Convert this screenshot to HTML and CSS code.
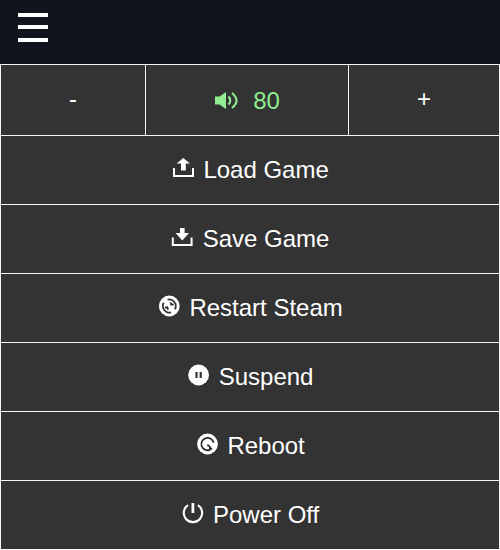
FILE: index.html
```html
<!DOCTYPE html>
<html lang="en">
<head>
<meta charset="utf-8">
<title>Remote</title>
<link rel="stylesheet" href="styles.css">
</head>
<body>
<header class="header">
  <svg class="menu" viewBox="0 0 30 30"><path d="M0 1h30v4H0zM0 13h30v4H0zM0 26h30v4H0z"/></svg>
</header>
<main class="panel">
  <div class="volume">
    <button class="cell step">-</button>
    <div class="cell level">
      <svg class="icon" viewBox="0 0 24 24"><path d="M1 7.500h4.500L12 3v17l-6.500-4.500H1z"/><path class="line" d="M14.500 7.500q3.600 4 0 8M18 4q9 7.500 0 15"/></svg>
      <span>80</span>
    </div>
    <button class="cell step">+</button>
  </div>
  <button class="cell">
    <svg class="icon" viewBox="0 0 24 24"><path d="M10.300 0L17 5.500h-4.200v7H8v-7H3.600z"/><path d="M0 10h2v7h17v-7h2v9H0z"/></svg>
    <span>Load Game</span>
  </button>
  <button class="cell">
    <svg class="icon" viewBox="0 0 24 24"><path d="M8 1h4.600v5H17l-6.700 7.500L3.600 6H8z"/><path d="M-.2 10.500h2V17h16.800v-6.500h2V19H-.2z"/></svg>
    <span>Save Game</span>
  </button>
  <button class="cell">
    <svg class="icon" viewBox="0.900 0 24 24"><circle cx="11.200" cy="10" r="10.400"/><path class="groove" d="M9.500 3.700a6.500 6.500 0 0 1 7.300 9.500M12.900 16.300a6.500 6.500 0 0 1-7.300-9.500M12.400 6.400l.8 2.300 2.400-.3M10 13.600l-.8-2.300-2.400.3"/></svg>
    <span>Restart Steam</span>
  </button>
  <button class="cell">
    <svg class="icon" viewBox="0.600 0 24 24"><circle cx="11.200" cy="10" r="10.400"/><path class="cut" d="M8 7h2.200v6H8zM12.200 7h2.200v6h-2.200z"/></svg>
    <span>Suspend</span>
  </button>
  <button class="cell">
    <svg class="icon" viewBox="0.700 0 24 24"><circle cx="11.200" cy="10" r="10.400"/><path class="groove" d="M17.300 8.800A6.200 6.200 0 1 0 13.500 15.800L15.800 14.300M13.500 15.300l.2-2.400-2.700-2.200"/></svg>
    <span>Reboot</span>
  </button>
  <button class="cell">
    <svg class="icon" viewBox="0.300 0 24 24"><path d="M9.800 0h2.800v10H9.800z"/><path class="line" d="M6.300 2.200a9.200 9.200 0 1 0 9.900 0"/></svg>
    <span>Power Off</span>
  </button>
</main>
</body>
</html>
```
FILE: styles.css
```css
* {
  box-sizing: border-box;
}

body {
  margin: 0;
  background: #10141d;
  color: #fff;
  font: 24px/28px "Liberation Sans", Arial, sans-serif;
}

.header {
  height: 64px;
  padding: 12px 18px;
}

.menu {
  display: block;
  width: 30px;
  height: 30px;
  fill: #fff;
}

.panel {
  display: grid;
  grid-template-rows: 70px repeat(6, 68px);
  gap: 1px;
  height: 486px;
  padding: 1px;
  background: #f5f5f5;
}

.volume {
  display: grid;
  grid-template-columns: 144px 202px 1fr;
  gap: 1px;
}

.cell {
  display: flex;
  align-items: center;
  justify-content: center;
  gap: 6.8px;
  margin: 0;
  padding: 0 0 0 1.400px;
  border: 0;
  background: #333;
  color: inherit;
  font: inherit;
}

.step {
  padding: 0 0 2px;
}

.level {
  gap: 15px;
  padding: 2px 0 0;
  color: #90ee90;
}

.icon {
  flex: none;
  width: 24px;
  height: 24px;
  fill: currentColor;
  overflow: visible;
}

.level .icon {
  margin-top: -1px;
}

.line {
  fill: none;
  stroke: currentColor;
  stroke-width: 2.1;
}

.cut {
  fill: #333;
}

.groove {
  fill: none;
  stroke: #333;
  stroke-width: 1.8;
}
```
